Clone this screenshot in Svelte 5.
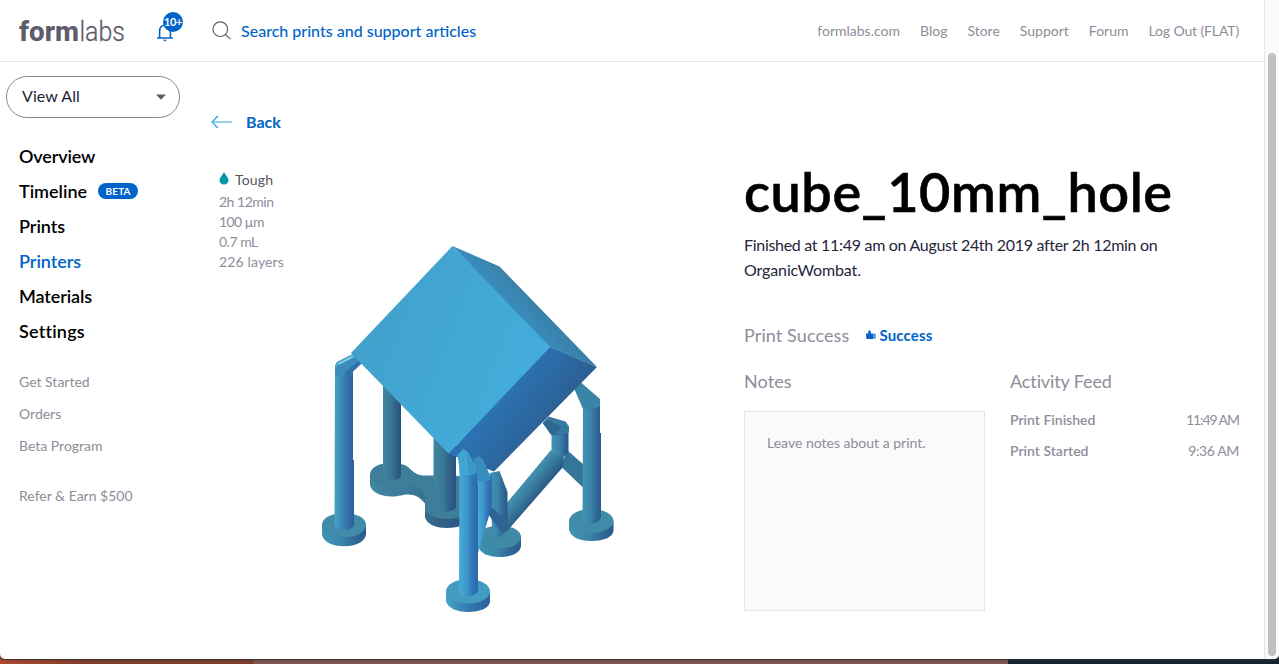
<script>
  const topLinks = ['formlabs.com', 'Blog', 'Store', 'Support', 'Forum', 'Log Out (FLAT)'];
  const nav = [
    { label: 'Overview', ls: -0.15 },
    { label: 'Timeline', ls: 0, beta: true },
    { label: 'Prints', ls: -0.05 },
    { label: 'Printers', ls: -0.05, active: true },
    { label: 'Materials', ls: -0.1 },
    { label: 'Settings', ls: 0.2 }
  ];
  const secondary = ['Get Started', 'Orders', 'Beta Program'];
  const specs = [
    { text: '2h 12min', ls: -0.5 },
    { text: '100 µm', ls: -0.6 },
    { text: '0.7 mL', ls: -0.5 },
    { text: '226 layers', ls: 0.14 }
  ];
  const feed = [
    { event: 'Print Finished', time: '11:49 AM', ls: -1.1 },
    { event: 'Print Started', time: '9:36 AM', ls: -0.4 }
  ];
</script>

<div class="desktop">
  <div class="window">
    <div class="page">
      <header>
        <svg class="logo" width="108" height="44" viewBox="0 0 108 44">
          <text class="wm bold" x="0" y="32" textLength="60" lengthAdjust="spacingAndGlyphs">form</text>
          <text class="wm thin" x="60.5" y="32" textLength="45.5" lengthAdjust="spacingAndGlyphs">labs</text>
        </svg>
        <div class="bell">
          <svg width="18" height="20" viewBox="0 0 18 20" fill="none" stroke="#0064c8" stroke-width="1.600">
            <path d="M1 16h16M3.600 15.500V9C3.600 5.500 5.500 3.200 9 3.200s5.400 2.300 5.400 5.800v6.500" />
            <path d="M9 1v2" /><path d="M6.900 17.800h4.200L9 19.600z" fill="#0064c8" stroke="none" />
          </svg>
          <span class="count">10+</span>
        </div>
        <div class="search">
          <svg width="20" height="20" viewBox="0 0 20 20" fill="none" stroke="#5d5c6b" stroke-width="1.200">
            <circle cx="8.300" cy="8.200" r="7.300" /><path d="M13.300 13.500l5.200 4.600" />
          </svg>
          <span>Search prints and support articles</span>
        </div>
        <nav class="top">
          {#each topLinks as l}<a>{l}</a>{/each}
        </nav>
      </header>

      <div class="body">
        <aside>
          <div class="select">
            <span>View All</span>
            <svg width="10" height="6" viewBox="0 0 10 6"><path d="M0 .5h10L5 5.700z" fill="#5d5c6b" /></svg>
          </div>
          <ul class="main-nav">
            {#each nav as n}
              <li class:active={n.active}>
                <span style="letter-spacing:{n.ls}px">{n.label}</span>
                {#if n.beta}<em>BETA</em>{/if}
              </li>
            {/each}
          </ul>
          <ul class="sub-nav">
            {#each secondary as s}<li>{s}</li>{/each}
          </ul>
          <div class="refer">Refer &amp; Earn $500</div>
        </aside>

        <main>
          <div class="back">
            <svg width="21" height="14" viewBox="0 0 21 14" fill="none" stroke="#1ba0e1" stroke-width="1.200">
              <path d="M6.800 1L1 7l5.800 6" /><path d="M1 7h20" stroke="#4db4e6" />
            </svg>
            <span>Back</span>
          </div>
          <div class="content">
            <div class="specs">
              <div class="resin">
                <svg width="10" height="13" viewBox="0 0 10 13"><path d="M5 .3C6.500 3 9.500 5.400 9.500 8.300a4.500 4.300 0 0 1-9 0C.5 5.400 3.500 3 5 .3z" fill="#0097a7" /></svg>
                <span>Tough</span>
              </div>
              {#each specs as s}<div class="spec" style="letter-spacing:{s.ls}px">{s.text}</div>{/each}
            </div>

            <svg class="model" width="320" height="380" viewBox="310 240 320 380">
              <defs>
                <linearGradient id="front" x1="0" y1="0.300" x2="1" y2="0.700">
                  <stop offset="0" stop-color="#429fca" /><stop offset="0.350" stop-color="#42a5d2" /><stop offset="1" stop-color="#44aedd" />
                </linearGradient>
                <linearGradient id="side" gradientUnits="userSpaceOnUse" x1="502" y1="312" x2="530" y2="286">
                  <stop offset="0" stop-color="#3b92c8" /><stop offset="1" stop-color="#387c9f" />
                </linearGradient>
                <linearGradient id="under" gradientUnits="userSpaceOnUse" x1="495" y1="405" x2="540" y2="440">
                  <stop offset="0" stop-color="#2c72b3" /><stop offset="1" stop-color="#2c5f92" />
                </linearGradient>
                <linearGradient id="legA">
                  <stop offset="0" stop-color="#44a2c6" /><stop offset="0.300" stop-color="#3c8cb8" /><stop offset="0.600" stop-color="#3274ac" /><stop offset="1" stop-color="#2c6098" />
                </linearGradient>
                <linearGradient id="legB">
                  <stop offset="0" stop-color="#3f87a0" /><stop offset="0.450" stop-color="#3a7796" /><stop offset="0.700" stop-color="#316288" /><stop offset="1" stop-color="#2a5180" />
                </linearGradient>
                <linearGradient id="legC">
                  <stop offset="0" stop-color="#45acd8" /><stop offset="0.400" stop-color="#3f98cb" /><stop offset="0.700" stop-color="#3078bb" /><stop offset="1" stop-color="#2c68a5" />
                </linearGradient>
                <linearGradient id="legD">
                  <stop offset="0" stop-color="#4194b4" /><stop offset="0.450" stop-color="#3a84a8" /><stop offset="0.700" stop-color="#316d9b" /><stop offset="1" stop-color="#2b588b" />
                </linearGradient>
                <linearGradient id="strut" gradientUnits="userSpaceOnUse" x1="525" y1="478" x2="541" y2="491">
                  <stop offset="0" stop-color="#4695b2" /><stop offset="0.500" stop-color="#3a7f9f" /><stop offset="1" stop-color="#2c5c8b" />
                </linearGradient>
              </defs>

              <!-- rear feet and the web that joins them -->
              <path d="M370 475v10c1 6 9 11.500 22 11.500 7 0 11-2 16-2 9 0 14 5 17 9v14c2 6 9 10.500 22 10.500s20-4 22-9v-42z" fill="url(#legB)" />
              <path d="M370 475c0-7 8-12 20-12 9 0 14 1 18 4 6 6 10 8.500 17 8.500h12c9-2 20 0 32 3v31c-3 6-10 9.500-22 9.500-13 0-22-5-22-12 0-8 1-11-3-16-5-5-12-6-17-5-20 4-35-3-35-11z" fill="#3e7e98" />
              <path d="M383 380h18v96q-1 4-9 4t-9-4z" fill="url(#legB)" />
              <path d="M433.500 435H456v72q-1 4.500-10 4.500T437 507v-19l-3.500-2z" fill="url(#legB)" />

              <!-- left leg -->
              <path d="M322 525v10c2 7 10 11.300 22 11.300s20-4.300 22-11.300v-10z" fill="url(#legD)" />
              <ellipse cx="344" cy="525" rx="22" ry="12.200" fill="#3f8ba9" />
              <path d="M335 366h18v94l1 0v65q-2 5-10 5t-9.500-5z" fill="url(#legA)" />
              <path d="M335 366l2-4 16-8 9 9-9 8.500v4l-18 0z" fill="#3b8cba" />
              <path d="M337 362l16-8 2.500 3-17 8-3.500 4v-3z" fill="#45a6ca" />
              <path d="M344 373l14-12 4 2-9 8.500v5h-7z" fill="#3071ab" />
              <path d="M338.500 364l14.500-7.500" stroke="#8fd0e6" stroke-width="1.600" />

              <!-- centre-rear leg foot, diagonal strut and upper right leg -->
              <path d="M478 537v9c2 7 10 11 21.500 11s21-4 21.500-11v-9z" fill="url(#legD)" />
              <ellipse cx="499.500" cy="537" rx="21.500" ry="11.500" fill="#3f8aa7" />
              <path d="M567 450l17 15 2 19.500-3 3-22-21z" fill="#34759a" />
              <path d="M551.500 431h17v21q-2 4-7 5t-10-5z" fill="url(#legD)" />
              <path d="M551 450l6 5 7 1-1 11-55 63-8 6 5-31z" fill="url(#strut)" />
              <path d="M542.500 423l6-6.500 17 5 3.500 5v6l-10 3-7 0z" fill="#377a9f" />
              <path d="M543 423l5-3 13 7-5 8h-5z" fill="#2d628f" opacity=".75" />

              <!-- right leg -->
              <path d="M569 521v9c2 7 10 11 22.500 11s22-4 22-11v-9z" fill="url(#legD)" />
              <ellipse cx="591.300" cy="521" rx="22.200" ry="12" fill="#3f8ba8" />
              <path d="M583 403l17-3v33l1 0v84q-2 6-9 6.500t-9.500-5.500z" fill="url(#legD)" />
              <path d="M573.500 387l4-4h4l18.500 16v7q-7 4-17 3z" fill="#3a84a8" />

              <!-- cube -->
              <path d="M545 346L549.500 346.500 597 367l-103 104.500-45-17.500z" fill="url(#under)" />
              <path d="M452.500 246l47 20.500L597 367l-47-19.500-8-6z" fill="url(#side)" />
              <path d="M448.500 453.500L550 347" stroke="#3789c4" />
              <path d="M452.500 246L351 353l97.500 100.500L550 347z" fill="url(#front)" />

              <!-- front legs -->
              <path d="M489.500 473l10-2 8 21v36l-7 9q-4 4-8 1z" fill="url(#legD)" />
              <path d="M478 506h13l-2 10-11 37z" fill="url(#legC)" />
              <path d="M490 506l16.500 14v9l-6 2.500-12-17z" fill="#2d6696" />
              <path d="M477 479l15-3v29q-3 4-8 4h-7z" fill="url(#legC)" />
              <path d="M473 459l6-3 4 3 8.500 20q-7 4-14 2z" fill="#388dc0" />
              <path d="M446 592v9c2 7 10 11 22 11s22-4 22-11v-9z" fill="url(#legA)" />
              <ellipse cx="468" cy="591.300" rx="22" ry="12.200" fill="#429cc0" />
              <path d="M459.500 469h17l1.500 20v102q-2 5-10 5t-9-4z" fill="url(#legC)" />
              <path d="M457.500 455l5.500-6 5 3 9 18-1 3q-9 4-16 1z" fill="#42a4d2" />
              <path d="M466 452l11 18-2 3-6 0z" fill="#378fc5" opacity=".7" />
            </svg>

            <section class="info">
              <h1>cube_10mm_hole</h1>
              <p class="summary"><span>Finished at 11:49 am on August 24th 2019 after 2h 12min on</span><br />OrganicWombat.</p>
              <div class="status">
                <h2>Print Success</h2>
                <svg width="10" height="10" viewBox="0 0 10 10" fill="#0064c8"><path d="M0 3.500h2.300V1.300C2.300.3 4.500.3 4.700 1.500l.3 2h2.600v5.500H1.500C.6 9 .2 8.300.2 7.500zM8.300 3.800h1.200v5H8.300z" /></svg>
                <strong>Success</strong>
              </div>
              <div class="columns">
                <div class="notes">
                  <h2>Notes</h2>
                  <div class="box">Leave notes about a print.</div>
                </div>
                <div class="feed">
                  <h2 class="tight">Activity Feed</h2>
                  {#each feed as f}
                    <div class="row"><b>{f.event}</b><span style="letter-spacing:{f.ls}px">{f.time}</span></div>
                  {/each}
                </div>
              </div>
            </section>
          </div>
        </main>
      </div>
    </div>
    <div class="scroll"><div class="thumb"></div></div>
  </div>
</div>

<style>
  :global(body) { font-family: Lato, sans-serif; overflow: hidden; }
  ul, h1, h2, p { margin: 0; padding: 0; list-style: none; }
  svg { display: block; flex: none; }
  .desktop {
    width: 1279px; height: 664px; overflow: hidden;
    background: linear-gradient(90deg, #b0482c 0, #7e3d2b 90px, #7e3d2b 253px, #7c5550 253px, #7c5550 1008px, #142331 1008px);
  }
  .window {
    display: flex; height: 659px; background: #fff;
    border-radius: 0 0 5px 5px; overflow: hidden; box-shadow: 0 1px 2px #333;
  }
  .page { width: 1264px; }
  .scroll {
    box-sizing: border-box; width: 15px; padding: 53px 0 3px 3px;
    background: #fafafa; border-left: 1px solid #e6e6e6; display: flex;
  }
  .thumb { width: 8px; border-radius: 4px; background: #c1c1c1; }

  header {
    box-sizing: border-box; display: flex; align-items: center;
    height: 62px; padding: 0 25px 0 19px; border-bottom: 1px solid #e6e6e6;
  }
  .wm { fill: #5d5c6b; font-family: Roboto, sans-serif; font-size: 27px; }
  .bold { font-weight: 800; }
  .thin { font-weight: 300; stroke: #5d5c6b; stroke-width: 0.300px; }
  .bell { position: relative; margin: 2px 0 0 29px; }
  .count {
    position: absolute; left: 7px; top: -10px; width: 20px; height: 20px; border-radius: 50%;
    background: #0064c8; color: #fff; font-size: 11px; line-height: 20px; font-weight: 700;
    letter-spacing: -0.400px; text-align: center;
  }
  .search {
    display: flex; align-items: center; gap: 9px; margin-left: 38px;
    color: #0064c8; font-size: 16px; font-weight: 500;
  }
  .top { display: flex; gap: 20px; margin-left: auto; color: #8e8d99; font-size: 14px; }
  .top a:last-child { letter-spacing: -0.130px; }

  .body { display: flex; }
  aside { width: 206px; }
  .select {
    box-sizing: border-box; display: flex; align-items: center; justify-content: space-between;
    width: 174px; height: 42px; margin: 14px 0 0 6px; padding: 0 13px 0 15px;
    border: 1px solid #8a8a8a; border-radius: 21px; font-size: 16px; color: #222233; letter-spacing: 0.100px;
  }
  .select span { padding-bottom: 3px; }
  .main-nav { margin: 20px 0 0 19px; }
  .main-nav li {
    display: flex; align-items: center; gap: 11px; height: 35px;
    font-size: 18px; font-weight: 600; color: #000;
  }
  .main-nav .active { color: #0064c8; }
  em {
    width: 40px; height: 16px; margin-top: 1px; border-radius: 8px; background: #0064c8; color: #fff;
    font: 700 10px/16px Lato, sans-serif; letter-spacing: 0.100px; text-align: center;
  }
  .sub-nav { margin: 18px 0 0 19px; }
  .sub-nav li { height: 32px; line-height: 32px; font-size: 14px; color: #8e8d99; }
  .refer { margin: 18px 0 0 19px; line-height: 32px; font-size: 14px; color: #8e8d99; }

  .back {
    display: flex; align-items: center; gap: 14px; height: 20px; margin: 50px 0 0 5px;
    color: #0064c8; font-size: 16px; font-weight: 700;
  }
  .back span { padding-bottom: 2px; }
  .content { display: flex; margin-top: 1px; }
  .specs { width: 91px; margin: 36px 0 0 13px; font-size: 14px; color: #8e8d99; }
  .resin { display: flex; align-items: center; gap: 6px; height: 20px; margin-bottom: 3px; color: #55545f; letter-spacing: 0.150px; }
  .resin svg { margin-bottom: 2px; }
  .spec { height: 20px; line-height: 20px; }
  .model { margin-top: 107px; }
  .info { width: 496px; margin-left: 114px; }
  h1 {
    margin-top: 26px; font-size: 54px; line-height: 66px; font-weight: 600;
    letter-spacing: 0.570px; color: #000; -webkit-text-stroke: 0.600px #000;
  }
  .summary { margin-top: 7px; font-size: 16px; line-height: 25px; color: #25253a; letter-spacing: -0.120px; white-space: nowrap; }
  .summary span { letter-spacing: -0.300px; }
  .status { display: flex; align-items: center; margin-top: 42px; }
  h2 { font-size: 18px; line-height: 22px; font-weight: 400; color: #8e8d99; letter-spacing: 0.100px; }
  .status svg { margin: 0 3px 0 17px; }
  strong { color: #0064c8; font-size: 15px; letter-spacing: 0.180px; }
  .columns { display: flex; gap: 25px; margin-top: 24px; }
  .tight { letter-spacing: -0.120px; }
  .box {
    box-sizing: border-box; width: 241px; height: 200px; margin-top: 19px; padding: 19px 22px;
    border: 1px solid #e6e6e6; background: #fafafa; color: #8e8d99; font-size: 14px; line-height: 24px;
  }
  .feed { width: 230px; }
  .feed h2 { margin-bottom: 12px; }
  .row { display: flex; justify-content: space-between; height: 31px; line-height: 31px; font-size: 14px; color: #8e8d99; }
  .row span { margin-right: 1.200px; }
  b { font-weight: 600; }
</style>
